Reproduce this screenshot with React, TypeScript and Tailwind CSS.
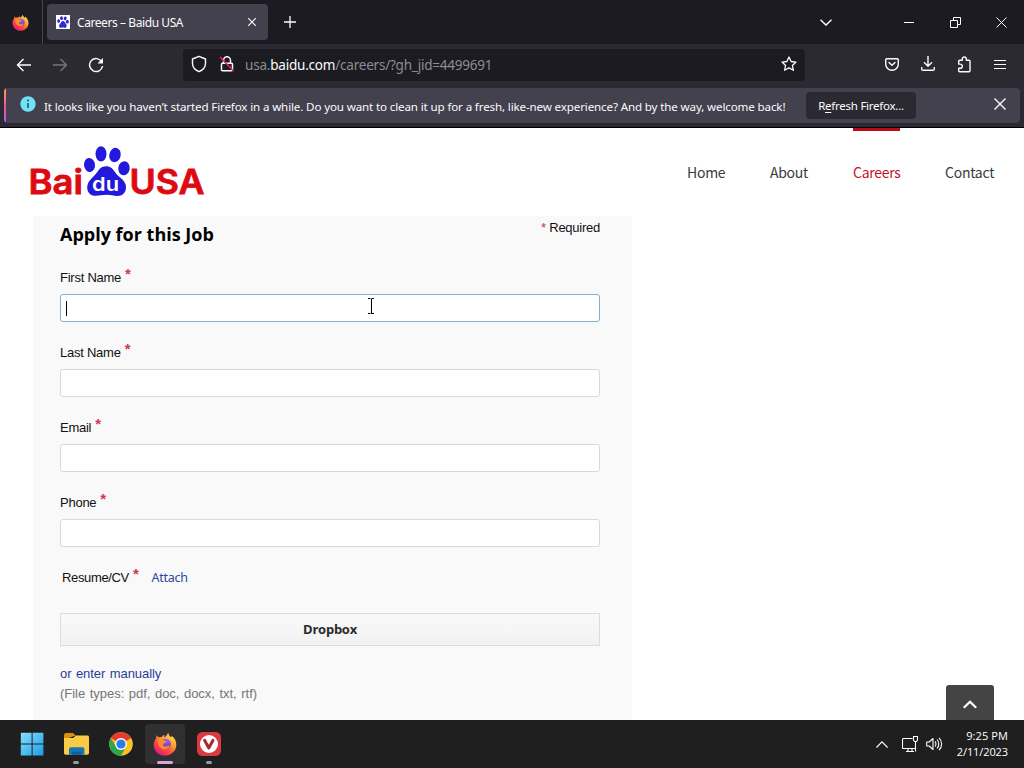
import React from 'react';

const fields = [
  { id: 'first_name', label: 'First Name', focused: true },
  { id: 'last_name', label: 'Last Name', focused: false },
  { id: 'email', label: 'Email', focused: false },
  { id: 'phone', label: 'Phone', focused: false },
];

const navItems = [
  { text: 'Home', width: 'w-[38px]' },
  { text: 'About', width: 'w-[38px]' },
  { text: 'Careers', width: 'w-[47px]', active: true },
  { text: 'Contact', width: 'w-[49px]' },
];

function FirefoxLogo({ size, id }: { size: number; id: string }) {
  return (
    <svg width={size} height={size} viewBox="0 0 24 24" className="shrink-0">
      <defs>
        <linearGradient id={`${id}-body`} x1="0.85" y1="0.1" x2="0.2" y2="0.95">
          <stop offset="0" stopColor="#ffe14a" />
          <stop offset="0.35" stopColor="#ff9a2e" />
          <stop offset="0.65" stopColor="#ff4a3d" />
          <stop offset="1" stopColor="#e31587" />
        </linearGradient>
        <linearGradient id={`${id}-globe`} x1="0.5" y1="0" x2="0.5" y2="1">
          <stop offset="0" stopColor="#a35cf0" />
          <stop offset="1" stopColor="#5b3fc4" />
        </linearGradient>
      </defs>
      <path
        d="M15.2.6c.2 2.1 1.2 3.3 2.8 4.7.5-.4.7-.9.7-1.5 3.1 2.3 4.7 5.600 4.600 9.200C23.200 19 18.300 23.600 12 23.600S.7 19 .7 12.900c0-2.900 1-5 2.300-6.500 0-.9.1-2.200.8-3.200.4 1 .9 1.600 1.600 2.100 1-.3 2.100-.3 3 0C9.600 3.700 10.500 3.200 11.700 3c-.5.8-.7 1.500-.5 2.300 1.300-.3 3-1.900 4-4.700z"
        fill={`url(#${id}-body)`}
      />
      <circle cx="12.600" cy="12" r="5.300" fill={`url(#${id}-globe)`} />
      <path
        d="M4.400 7.500c2.400-1.200 4.900-.8 6.800.9 1.500.2 2.400.8 2.200 1.600-.4 1-2.600.8-3.200 2-.7 1.500 1.100 3 3 2.600 1.500-.3 2.100-1.200 3.400-.7-.8 2.500-3.200 3.800-5.600 3.400C6.800 16.700 4.300 13 4.400 7.500z"
        fill="#ff8a2b"
      />
    </svg>
  );
}

function Paw() {
  return (
    <g>
      <ellipse cx="11" cy="31" rx="6" ry="7.500" transform="rotate(-8 11 31)" />
      <ellipse cx="23" cy="19" rx="6" ry="8" />
      <ellipse cx="38" cy="20" rx="6" ry="8" transform="rotate(12 38 20)" />
      <ellipse cx="47" cy="34" rx="6.500" ry="7.500" transform="rotate(15 47 34)" />
    </g>
  );
}

function BaiduLogo() {
  return (
    <svg width="184" height="60" viewBox="25 145 184 60">
      <g fill="#dd0a12" stroke="#dd0a12" strokeWidth="0.800" fontFamily="Inter, sans-serif" fontWeight="600">
        <text x="28.500" y="194" fontSize="34" textLength="54.500" lengthAdjust="spacingAndGlyphs">Bai</text>
        <text x="129.500" y="194" fontSize="34" textLength="75" lengthAdjust="spacingAndGlyphs">USA</text>
      </g>
      <g fill="#2319dc">
        <ellipse cx="89.500" cy="165" rx="5.500" ry="7" transform="rotate(-8 89.500 165)" />
        <ellipse cx="101" cy="153.800" rx="5.500" ry="7.600" />
        <ellipse cx="115" cy="155" rx="5.700" ry="7.200" transform="rotate(12 115 155)" />
        <ellipse cx="124" cy="168.300" rx="5.700" ry="7" transform="rotate(8 124 168.300)" />
        <path d="M106 166.300c4.500 0 7 2.700 9.500 6.500 3 4.500 10.500 7.500 10.500 14.500 0 5.600-3.700 8.700-8.500 8.700-4 0-6.500-1.200-11-1.200s-6.500 1-11 1c-5 0-8.300-3.300-8.300-8.300 0-6.500 6-9.800 9.500-14.700 2.600-3.700 4.800-6.500 9.300-6.500z" />
      </g>
      <text x="92" y="191" fontSize="18.500" textLength="27" lengthAdjust="spacingAndGlyphs" fill="#fff" fontFamily="Inter, sans-serif" fontWeight="600">du</text>
    </svg>
  );
}

function TabBar() {
  return (
    <div className="flex h-11 items-center bg-[#1c1b22] text-[#fbfbfe]">
      <div className="flex h-full w-[43px] items-center border-r border-[#46454d] pl-3">
        <FirefoxLogo size={17} id="ff-small" />
      </div>
      <div className="ml-1 flex h-9 w-[221px] items-center rounded bg-[#42414d] pr-[11px] pl-[9px]">
        <svg width="14" height="14" viewBox="0 0 58 58" className="bg-white" fill="#2b2bd0">
          <g transform="translate(0 -6)"><Paw /></g>
          <path d="M28 25c7 0 8 5 12 10 8 8 4 19-4 18-6-1-9-1-14 0-9 1-13-10-5-17 5-5 5-11 11-11z" />
        </svg>
        <span className="mt-0.5 ml-[7px] flex-1 font-['Noto_Sans'] text-[12px] tracking-[-0.42px] whitespace-nowrap">Careers – Baidu USA</span>
        <svg width="10" height="10" viewBox="0 0 10 10" stroke="currentColor" strokeWidth="1.100">
          <path d="M1.200 1.200l7.600 7.600M8.800 1.200L1.200 8.800" />
        </svg>
      </div>
      <svg width="12" height="12" viewBox="0 0 12 12" stroke="currentColor" strokeWidth="1.300" className="ml-4">
        <path d="M6 0v12M0 6h12" />
      </svg>
      <div className="ml-auto flex items-center pr-[17px]">
        <svg width="12" height="7" viewBox="0 0 12 7" fill="none" stroke="currentColor" strokeWidth="1.400">
          <path d="M.5.700L6 6.100 11.500.700" />
        </svg>
        <span className="ml-[72px] h-px w-[10px] bg-white" />
        <svg width="11" height="11" viewBox="0 0 11 11" fill="none" stroke="currentColor" className="ml-9">
          <path d="M.5 3.500h7v7h-7zM3.500 3.500v-3h7v7h-3" />
        </svg>
        <svg width="11" height="11" viewBox="0 0 11 11" stroke="currentColor" className="ml-[35px]">
          <path d="M.5.500l10 10M10.500.500l-10 10" />
        </svg>
      </div>
    </div>
  );
}

function Toolbar() {
  return (
    <div className="flex h-11 items-center bg-[#2b2a33] pb-[3px] text-[#fbfbfe]">
      <svg width="16" height="14" viewBox="0 0 16 14" fill="none" stroke="currentColor" strokeWidth="1.400" className="ml-4">
        <path d="M15 7H1.500M7.500 1l-6 6 6 6" />
      </svg>
      <svg width="16" height="14" viewBox="0 0 16 14" fill="none" stroke="#77767e" strokeWidth="1.400" className="ml-5">
        <path d="M1 7h13.500M8.500 1l6 6-6 6" />
      </svg>
      <svg width="16" height="16" viewBox="0 0 16 16" fill="none" stroke="currentColor" strokeWidth="1.500" className="ml-5">
        <path d="M13.800 5A6.500 6.500 0 1 0 14.500 9" />
        <path d="M9.500 6.500h5.500V1z" fill="currentColor" stroke="none" />
      </svg>
      <div className="ml-[79px] flex h-8 w-[622px] items-center rounded bg-[#1c1b22] pr-2 pl-2">
        <svg width="16" height="18" viewBox="0 0 16 18" fill="none" stroke="currentColor" strokeWidth="1.400" strokeLinejoin="round" className="-mt-px">
          <path d="M8 1.300L14.500 4v4.500c0 3.500-2.500 6.500-6.500 8.200-4-1.700-6.500-4.700-6.500-8.200V4z" />
        </svg>
        <svg width="16" height="16" viewBox="0 0 16 16" fill="none" stroke="currentColor" strokeWidth="1.500" className="-mt-px ml-3">
          <path d="M4.500 7V4.200a3.500 3.500 0 0 1 7 0V7M3.500 7.200h9c.6 0 1 .4 1 1v5.600c0 .6-.4 1-1 1h-9c-.6 0-1-.4-1-1V8.200c0-.6.4-1 1-1z" />
          <path d="M1 1l13.500 14" stroke="#e22850" />
        </svg>
        <span className="mt-0.5 ml-[10px] flex-1 font-['Noto_Sans'] text-[13.5px] tracking-[-0.21px] whitespace-nowrap text-[#8d8c94]">
          usa.<span className="text-[#fbfbfe]">baidu.com</span>/careers/?gh_jid=4499691
        </span>
        <svg width="16" height="16" viewBox="0 0 16 16" fill="none" stroke="currentColor" strokeWidth="1.300" strokeLinejoin="round" className="-mt-px">
          <path d="M8 1l2.100 4.500 4.900.6-3.600 3.300 1 4.900L8 11.900l-4.400 2.400 1-4.900L1 6.100l4.900-.6z" />
        </svg>
      </div>
      <div className="ml-auto flex items-center pr-[18px]">
        <svg width="14" height="13" viewBox="0 0 14 13" fill="none" stroke="currentColor" strokeWidth="1.400" strokeLinecap="round" strokeLinejoin="round">
          <path d="M1.700.8h10.600c.6 0 1 .4 1 1V6A6.300 6.300 0 0 1 .7 6V1.800c0-.6.4-1 1-1zM4 4.500l3 2.800 3-2.800" />
        </svg>
        <svg width="14" height="15" viewBox="0 0 14 15" fill="none" stroke="currentColor" strokeWidth="1.400" className="-mt-0.5 ml-[22px]">
          <path d="M7 0v10M3 6.300l4 3.900 4-3.900M.7 11v2c0 .7.500 1.200 1.200 1.200h10.200c.7 0 1.200-.5 1.200-1.200v-2" />
        </svg>
        <svg width="15" height="17" viewBox="0 0 15 17" fill="none" stroke="currentColor" strokeWidth="1.400" strokeLinejoin="round" className="-mt-px ml-[22px]">
          <path d="M1.700 8V5.300c0-.6.4-1 1-1h2.600V3a2 2 0 0 1 4 0v1.300H12c.6 0 1 .4 1 1v9.500c0 .6-.4 1-1 1H2.700c-.6 0-1-.4-1-1v-2.500h1.500a2.100 2.100 0 0 0 0-4.200z" />
        </svg>
        <svg width="12" height="11" viewBox="0 0 12 11" stroke="currentColor" className="-mt-px ml-[22px]">
          <path d="M0 1.500h12M0 5.500h12M0 9.500h12" strokeWidth="1.200" />
        </svg>
      </div>
    </div>
  );
}

function NotificationBar() {
  return (
    <div className="h-10 border-b border-black bg-[#2b2a33] px-1">
      <div className="flex h-[35px] items-center overflow-hidden rounded bg-[#42414d] text-[#fbfbfe]">
        <span className="h-full w-0.5 bg-linear-to-b from-[#ff9f4a] via-[#f0558a] to-[#a259f0]" />
        <svg width="16" height="16" viewBox="0 0 16 16" className="-mt-1 ml-[14px]">
          <circle cx="8" cy="8" r="7.700" fill="#6fe3f5" />
          <path d="M8 7v5" stroke="#2b4a58" strokeWidth="1.500" />
          <circle cx="8" cy="4.600" r="1" fill="#2b4a58" />
        </svg>
        <span className="mt-0.5 ml-2 w-[762px] font-['Noto_Sans'] text-[11.6px] tracking-[-0.14px] whitespace-nowrap">
          It looks like you haven’t started Firefox in a while. Do you want to clean it up for a fresh, like-new experience? And by the way, welcome back!
        </span>
        <button className="h-[27px] w-[110px] rounded bg-[#2b2a33] font-['Noto_Sans'] text-[11.5px] tracking-[-0.25px] whitespace-nowrap">
          R<span className="underline underline-offset-2">e</span>fresh Firefox...
        </button>
        <svg width="12" height="12" viewBox="0 0 12 12" stroke="currentColor" strokeWidth="1.400" className="-mt-1 mr-[14px] ml-auto">
          <path d="M.5.500l11 11M11.500.500l-11 11" />
        </svg>
      </div>
    </div>
  );
}

function SiteHeader() {
  return (
    <header className="flex h-[88px] justify-between bg-white pr-[30px] pl-[25px]">
      <div className="pt-[17px]"><BaiduLogo /></div>
      <nav className="flex gap-[45px] font-['Noto_Sans_CJK_SC'] text-[14px] tracking-[-0.27px]">
        {navItems.map(({ text, width, active }) => (
          <a
            key={text}
            className={`${width} border-t-[3px] pt-[31px] leading-5 ${active ? 'border-[#b80d18] text-[#c4141c]' : 'border-transparent text-[#3a3a3a]'}`}
          >
            {text}
          </a>
        ))}
      </nav>
    </header>
  );
}

function Required() {
  return <span className="relative -top-0.5 ml-1 text-[15px] leading-none font-bold text-[#cf3a50]">*</span>;
}

function ApplicationForm() {
  return (
    <form className="relative ml-[33px] h-[504px] w-[599px] bg-[#f9f9f9] pr-8 pl-[27px] font-['Liberation_Sans'] text-[13px] tracking-[-0.25px] text-[#111]">
      <div className="flex h-[52px] justify-between">
        <h2 className="font-['Open_Sans'] text-[18px] leading-9 font-bold tracking-normal text-black">Apply for this Job</h2>
        <span className="leading-6"><span className="text-[#b0404a]">*</span> Required</span>
      </div>
      {fields.map(({ id, label, focused }) => (
        <div key={id} className="h-[75px]">
          <label htmlFor={id} className="flex h-[26px] leading-5">{label}<Required /></label>
          <div
            id={id}
            className={`flex h-7 items-center rounded-[3px] border bg-white pl-[5px] ${focused ? 'border-[#7fb1d0]' : 'border-[#d9d9d9]'}`}
          >
            {focused && <span className="h-[15px] w-px bg-black" />}
          </div>
        </div>
      ))}
      <div className="flex h-[45px] pl-0.5 leading-5">
        <span className="tracking-[-0.35px]">Resume/CV</span><Required />
        <a className="ml-[13px] font-['Noto_Sans'] text-[12.5px] text-[#2a479f]">Attach</a>
      </div>
      <button type="button" className="block h-[33px] w-full border border-[#dcdcdc] bg-linear-to-b from-[#f9f9f9] to-[#f2f2f2] font-['Open_Sans'] text-[13px] font-bold text-[#2b2b2b]">
        Dropbox
      </button>
      <div className="mt-[18px] leading-5 tracking-[-0.03px] [word-spacing:1px]">
        <a className="block tracking-[-0.07px] text-[#1f3f9b]">or enter manually</a>
        <p className="text-[#757575]">(File types: pdf, doc, docx, txt, rtf)</p>
      </div>
      {/* text cursor */}
      <svg width="8" height="17" viewBox="0 0 8 17" fill="none" stroke="#000" className="absolute top-[82px] left-[334px]">
        <path d="M1 .5h2.500M4.500 .5h2.500M4.500 1v15M1 15.500h2.500M4.500 15.500h2.500" />
      </svg>
    </form>
  );
}

function Taskbar() {
  return (
    <div className="flex h-12 items-center bg-[#1f1f20] text-white">
      <svg width="24" height="24" viewBox="0 0 24 24" className="ml-5">
        <defs>
          <linearGradient id="win" x1="0" y1="0" x2="24" y2="24" gradientUnits="userSpaceOnUse">
            <stop stopColor="#8be3fb" />
            <stop offset="1" stopColor="#189be8" />
          </linearGradient>
        </defs>
        <path d="M.8.800h10.800v10.800H.8zM12.600.800h10.800v10.800H12.600zM.8 12.600h10.800v10.800H.8zM12.600 12.600h10.800v10.800H12.600z" fill="url(#win)" />
      </svg>
      <div className="relative ml-5 flex h-10 w-[25px] items-center">
        <svg width="25" height="24" viewBox="0 0 25 24">
          <path d="M0 3.500C0 2 .8 1 2 1h7l3 3h-2L0 8z" fill="#d9920f" />
          <path d="M0 6h9l3-2.500h11.500c.8 0 1.500.7 1.500 1.500v16c0 1-.8 1.700-1.700 1.700H1.700C.8 22.700 0 22 0 21z" fill="#fccb45" />
          <path d="M5 22.700V17c0-1 .8-1.700 1.700-1.700h12c.9 0 1.700.7 1.700 1.700v5.700z" fill="#1478b8" />
          <path d="M8 22.700v-3h9.500v3z" fill="#0d5c9c" />
        </svg>
        <span className="absolute bottom-0 left-[9px] h-[3px] w-1.5 rounded-full bg-[#9a9a9a]" />
      </div>
      <svg width="24" height="24" viewBox="0 0 24 24" className="ml-5">
        <circle cx="12" cy="12" r="11.800" fill="#fcc31e" />
        <path d="M12 12L1.800 6.100A11.800 11.800 0 0 1 22.200 6.100z" fill="#e33b2e" />
        <path d="M1.800 6.100A11.800 11.800 0 0 0 12 23.800L17 15 7 14.800z" fill="#2da44e" />
        <circle cx="12" cy="12" r="5.900" fill="#fff" />
        <circle cx="12" cy="12" r="4.600" fill="#2b7be9" />
      </svg>
      <div className="relative ml-3 flex h-10 w-10 items-center justify-center rounded bg-[#303031]">
        <FirefoxLogo size={24} id="ff-task" />
        <span className="absolute bottom-0 left-3 h-[3px] w-4 rounded-full bg-[#d5a5df]" />
      </div>
      <div className="relative ml-3 flex h-10 w-6 items-center">
        <svg width="24" height="24" viewBox="0 0 24 24">
          <rect width="24" height="24" rx="5.500" fill="#d9393f" />
          <circle cx="12" cy="12" r="9" fill="#fff" />
          <path d="M7.600 8.300l4.200 7.700 4.200-7.700" fill="none" stroke="#a52a35" strokeWidth="3" strokeLinecap="round" strokeLinejoin="round" />
        </svg>
        <span className="absolute bottom-0 left-[9px] h-[3px] w-1.5 rounded-full bg-[#9a9a9a]" />
      </div>
      <div className="ml-auto flex items-center pr-4">
        <svg width="12" height="7" viewBox="0 0 12 7" fill="none" stroke="currentColor" strokeWidth="1.200">
          <path d="M.4 6.500L6 .9l5.600 5.600" />
        </svg>
        <svg width="17" height="17" viewBox="0 0 17 17" fill="none" stroke="currentColor" strokeWidth="1.100" className="ml-[14px]">
          <path d="M10.500 2.500H1.500c-.5 0-1 .4-1 1v8.200c0 .5.500.8 1 .8H13.500V6.500M4 15.500h8M6 12.500v3M10 12.500v3M11.500.500h4v3.500l-1 1.500h-2l-1-1.500zM13.500 5.500v10" />
        </svg>
        <svg width="17" height="14" viewBox="0 0 17 14" fill="none" stroke="currentColor" strokeWidth="1.100" strokeLinejoin="round" className="ml-[7px]">
          <path d="M.7 5v4h2.500L7 12.500v-11L3.200 5zM9 4.500c1.300 1.300 1.300 3.700 0 5M11 2.700c2.400 2.300 2.400 6.300 0 8.600M13 .9c3.500 3.300 3.500 8.900 0 12.200" />
        </svg>
        <div className="ml-3 w-[53px] text-right font-['Open_Sans'] text-[11px] leading-4 whitespace-nowrap">
          <div className="tracking-[0.1px]">9:25 PM</div>
          <div className="tracking-[-0.1px]">2/11/2023</div>
        </div>
      </div>
    </div>
  );
}

function App() {
  return (
    <div className="h-[768px] w-[1024px] overflow-hidden bg-white">
      <TabBar />
      <Toolbar />
      <NotificationBar />
      <main className="relative h-[592px] overflow-hidden bg-white">
        <SiteHeader />
        <ApplicationForm />
        {/* back to top */}
        <button className="absolute right-[30px] bottom-0 flex h-[35px] w-12 items-center justify-center rounded-t-[3px] bg-[#444]">
          <svg width="14" height="9" viewBox="0 0 14 9" fill="none" stroke="#fff" strokeWidth="2.200" className="mt-1">
            <path d="M.8 7.800L7 1.700l6.200 6.100" />
          </svg>
        </button>
      </main>
      <Taskbar />
    </div>
  );
}

export default App;
